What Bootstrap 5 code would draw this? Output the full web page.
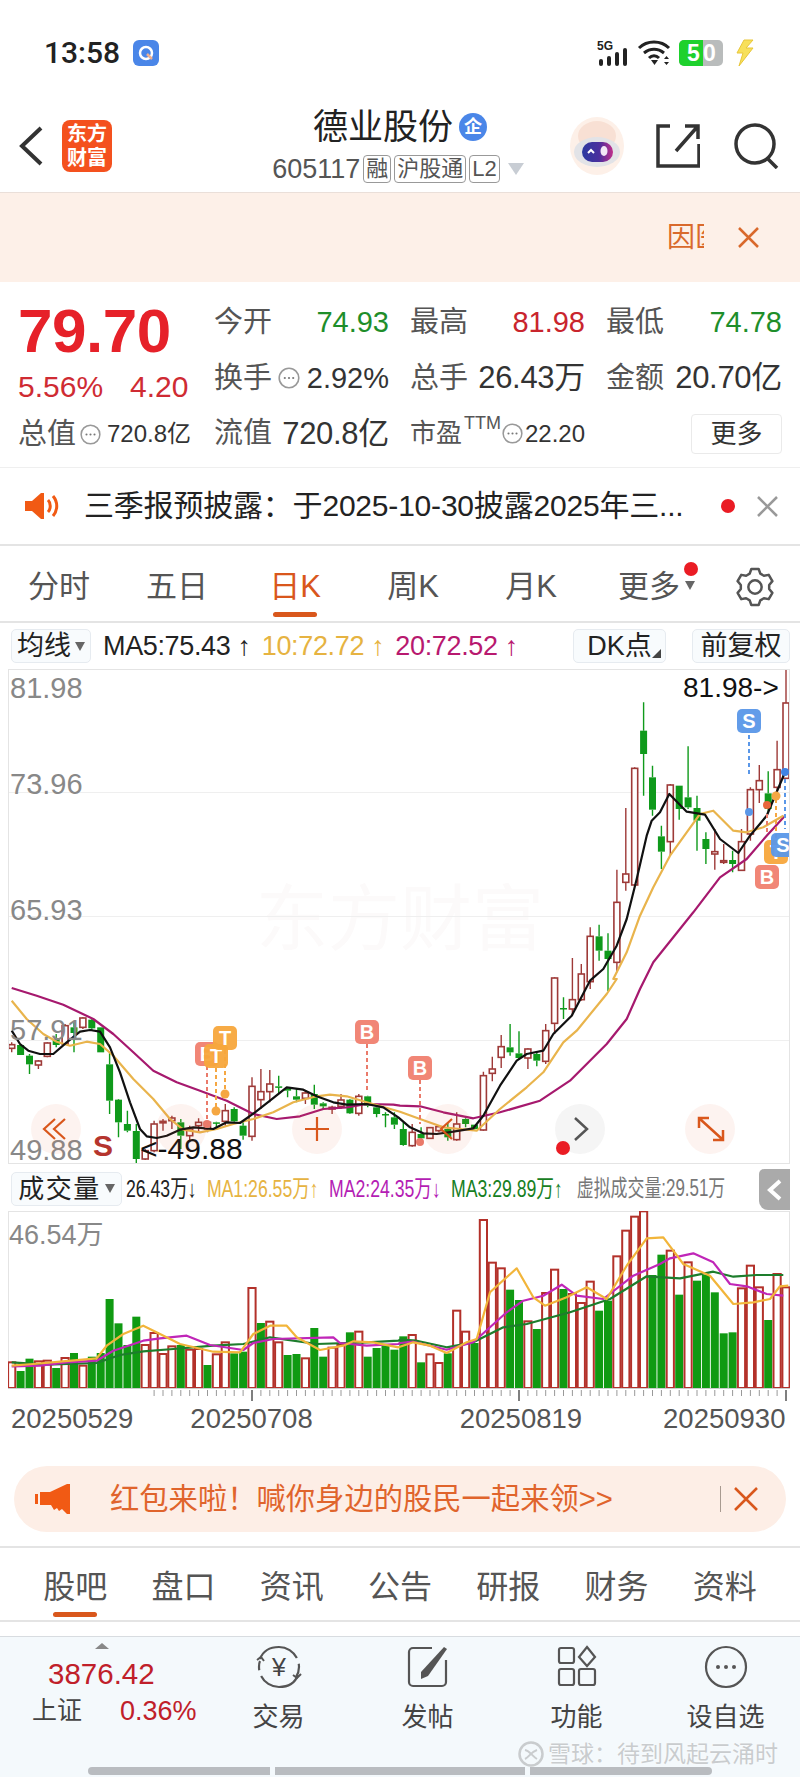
<!DOCTYPE html>
<html lang="zh">
<head>
<meta charset="UTF-8">
<meta name="viewport" content="width=device-width, initial-scale=1.0">
<title>德业股份</title>
<link href="https://cdn.jsdelivr.net/npm/bootstrap@5.3.0/dist/css/bootstrap.min.css" rel="stylesheet">
<style>
  html, body { margin: 0; width: 800px; height: 1778px; overflow: hidden; background: #fff; }
  body { font-family: "Liberation Sans", "Noto Sans CJK SC", sans-serif; color: #333; }
  svg { display: block; flex: none; }
  svg text { font-family: "Liberation Sans", "Noto Sans CJK SC", sans-serif; }

  .status-bar { height: 100px; padding: 5px 44px 0; }
  .clock { font-family: Roboto, sans-serif; font-size: 30px; font-weight: 500; color: #222; }
  .app-dot { width: 26px; height: 26px; border-radius: 6px; background: #4a86e8; margin-left: 13px; }
  .batt { width: 44px; height: 26px; border-radius: 5px; background: #b9bcbc; overflow: hidden; font-size: 23px; font-weight: 700; color: #fff; line-height: 26px; margin: 0 9px 0 8px; }
  .batt-fill { width: 24px; height: 26px; background: #1ed12d; padding-left: 8px; }

  .top-bar { height: 93px; border-bottom: 1px solid #eadfd9; }
  .logo-box { width: 50px; height: 52px; border-radius: 8px; background: #f4511e; color: #fff; font-size: 20px; font-weight: 700; line-height: 24px; text-align: center; padding-top: 2px; margin: 0 0 0 16px; }
  .top-title { left: 0; width: 800px; top: 5px; }
  .stock-name { font-size: 35px; line-height: 44px; color: #222; }
  .name-badge { width: 28px; height: 28px; border-radius: 50%; background: #4a86e8; color: #fff; font-size: 18px; font-weight: 700; line-height: 28px; text-align: center; margin-left: 6px; }
  .stock-code { font-size: 27px; line-height: 34px; color: #555; margin-top: 3px; padding-right: 4px; }
  .code-tag { border: 1px solid #999; border-radius: 4px; font-size: 22px; line-height: 26px; padding: 0 2px; margin-left: 3px; color: #555; }
  .code-caret { width: 0; height: 0; border: 8px solid transparent; border-top: 12px solid #c8cdd4; border-bottom: 0; margin-left: 8px; }

  .warn-strip { height: 89px; background: #fdf0e8; color: #d9692c; padding-right: 40px; }
  .warn-clip { width: 37px; overflow: hidden; white-space: nowrap; font-size: 28px; margin-right: 33px; }

  .quote-box { height: 186px; padding: 13px 18px 0; border-bottom: 1px solid #efefef; }
  .quote-left { width: 197px; }
  .last-price { font-size: 62px; font-weight: 700; line-height: 72px; color: #e62129; letter-spacing: -.5px; }
  .price-change { font-size: 30px; line-height: 40px; color: #cf2b33; }
  .left-total { line-height: 38px; font-size: 29px; color: #555; white-space: nowrap; margin-top: 8px; }
  .left-total b { font-weight: 400; font-size: 24px; color: #333; margin-left: 6px; }
  .quote-grid { display: grid; grid-template-columns: 175px 175px 176px; column-gap: 21px; grid-auto-rows: 55.5px; }
  .quote-cell { display: flex; align-items: center; justify-content: space-between; font-size: 29px; color: #555; white-space: nowrap; }
  .val-dark { color: #333; }
  .val-big { font-size: 31px; letter-spacing: -.3px; }
  .val-green { color: #1e8e2a; }
  .val-red { color: #c9252d; }
  .pe-label { font-size: 26px; }
  .pe-label sup { font-size: 18px; top: -13px; margin-left: 2px; }
  .pe-val { font-size: 24px; color: #333; }
  .more-btn { width: 91px; height: 40px; border: 1px solid #eaeaea; border-radius: 4px; background: #fff; font-size: 26px; line-height: 38px; text-align: center; color: #333; margin-left: auto; }

  .notice-row { height: 78px; border-bottom: 2px solid #e4e4e4; padding: 0 22px 0 25px; }
  .notice-text { font-size: 30px; color: #222; width: 600px; margin-left: 25px; padding-bottom: 2px; white-space: nowrap; letter-spacing: -.2px; }
  .notice-dot { width: 14px; height: 14px; border-radius: 50%; background: #ea1c24; margin-left: 37px; margin-right: 22px; }

  .period-tabs { height: 77px; padding-top: 7px; border-bottom: 2px solid #e4e4e4; }
  .period-tab { width: 118px; text-align: center; font-size: 31px; color: #555; position: relative; }
  .tab-on { color: #d9571c; }
  .tab-on::after { content: ""; position: absolute; left: 50%; bottom: -7px; width: 44px; height: 5px; margin-left: -22px; background: #d9571c; border-radius: 3px; }
  .red-pin { position: absolute; right: -18px; top: -7px; width: 14px; height: 14px; border-radius: 50%; background: #ea1c24; }
  .small-caret { position: absolute; right: -15px; top: 12px; border: 5px solid transparent; border-top: 9px solid #666; border-bottom: 0; }

  .ma-row { height: 46px; padding: 0 10px 0 11px; font-size: 27px; white-space: nowrap; }
  .ma-chip { border: 1px solid #e6ebf0; border-radius: 5px; background: #f8fbfd; height: 34px; line-height: 32px; font-size: 27px; color: #222; text-align: center; position: relative; }
  .ma-val { margin-right: 11px; letter-spacing: -.35px; }
  .c-black { color: #222; } .c-orange { color: #e6b341; } .c-pink { color: #b8196f; }
  .c-violet { color: #b41db4; } .c-dkgreen { color: #17801f; } .c-grey { color: #777; }
  .chip-caret { border: 5px solid transparent; border-top: 9px solid #666; border-bottom: 0; }
  .chip-corner { position: absolute; right: 4px; bottom: 4px; border-left: 9px solid transparent; border-bottom: 9px solid #444; }

  .chart-box { margin-left: 8px; width: 782px; border: 1px solid #e4e4e4; }
  .vol-head { height: 47px; padding: 2px 0 0 11px; position: relative; white-space: nowrap; }
  .vol-head .ma-chip { flex: none; width: 111px; height: 34px; margin-right: 4px; font-size: 26px; letter-spacing: 1.5px; }
  .vol-vals { flex: none; width: 800px; display: flex; align-items: center; font-size: 24px; transform: scaleX(.735); transform-origin: left center; }
  .vol-val { margin-right: 14px; }
  .vol-virtual { margin-left: 5px; font-size: 23px; }
  .fold-tab { position: absolute; right: 10px; top: 5px; width: 31px; height: 41px; background: #aaa; border-top-left-radius: 5px; border-bottom-left-radius: 9px; }
  .vol-wrap { margin-left: 8px; width: 782px; }
  .date-row { height: 32px; margin-top: -8px; font-size: 27.5px; color: #555; padding-left: 3px; }
  .date-row span + span { margin-left: 57px; }
  .date-row span:nth-child(3) { margin-left: 147px; }
  .date-row span:nth-child(4) { margin-left: 81px; }

  .promo-pill { margin: 36px 14px 0; height: 66px; border-radius: 33px; background: #fdeee6; padding: 0 28px 0 21px; color: #e0642c; font-size: 29.3px; white-space: nowrap; }
  .promo-text { margin-left: 39px; flex: 1; }
  .promo-sep { width: 1px; height: 26px; background: #a89a90; margin-right: 13px; }

  .info-tabs { height: 76px; margin-top: 14px; padding: 6px 21px 0; border-top: 2px solid #e4e4e4; border-bottom: 2px solid #e4e4e4; }
  .info-tab { flex: 1; text-align: center; font-size: 32px; color: #555; position: relative; }
  .info-tab.tab-on::after { bottom: -6px; }

  .bottom-bar { position: relative; margin-top: 14px; height: 141px; background: #f4f9fc; border-top: 1px solid #d8dce0; }
  .index-cell { width: 204px; position: relative; }
  .index-caret { position: absolute; left: 95px; top: 6px; border: 7px solid transparent; border-bottom: 6px solid #888; border-top: 0; }
  .index-num { position: absolute; left: 48px; top: 15px; font-size: 29.5px; color: #c0202a; }
  .index-name { position: absolute; left: 32px; top: 55px; font-size: 25px; color: #444; }
  .index-pct { position: absolute; left: 120px; top: 54px; font-size: 27px; color: #c0202a; }
  .bar-item { width: 149px; text-align: center; font-size: 26px; line-height: 36px; color: #444; padding-top: 8px; }
  .bar-item svg { margin: 0 auto 10px; }
  .xq-mark { position: absolute; right: 22px; top: 100px; color: #c9ccce; font-size: 23px; white-space: nowrap; text-shadow: 0 0 2px #fff; }
  .home-bars { position: absolute; left: 88px; top: 130px; gap: 5px; }
  .home-bars span { height: 8px; background: #b9bcc0; display: block; }
</style>
</head>
<body>
<svg width="0" height="0" style="position:absolute">
  <defs><linearGradient id="visor" x1="0" x2="1" y1="0" y2="0"><stop offset="0" stop-color="#2b3aa0"/><stop offset=".55" stop-color="#4a2f9e"/><stop offset="1" stop-color="#c02f8a"/></linearGradient></defs>
  <symbol id="dots" viewBox="0 0 22 22">
    <circle cx="11" cy="11" r="9.8" fill="none" stroke="#999" stroke-width="1.6"/>
    <circle cx="6.8" cy="11" r="1.1" fill="#777"/><circle cx="11" cy="11" r="1.1" fill="#777"/><circle cx="15.2" cy="11" r="1.1" fill="#777"/>
  </symbol>
</svg>

<div class="status-bar d-flex align-items-center">
  <span class="clock">13:58</span>
  <span class="app-dot d-flex align-items-center justify-content-center">
    <svg width="18" height="18" viewBox="0 0 18 18"><circle cx="9" cy="9" r="6" fill="none" stroke="#fff" stroke-width="2.5"/><path d="M10 10l5 5" stroke="#f0b090" stroke-width="2.5"/></svg>
  </span>
  <div class="ms-auto d-flex align-items-center">
    <svg width="32" height="28" viewBox="0 0 32 28"><text x="0" y="11" font-size="12" font-weight="700" fill="#222">5G</text><rect x="2" y="20" width="4" height="7" rx="2" fill="#222"/><rect x="10" y="17" width="4" height="10" rx="2" fill="#222"/><rect x="18" y="13" width="4" height="14" rx="2" fill="#222"/><rect x="26" y="9" width="4" height="18" rx="2" fill="#222"/></svg>
    <svg class="ms-2" width="34" height="28" viewBox="0 0 34 28"><path d="M2 9C10 1 24 1 32 9M7 14c6-5 14-5 20 0M12 19c3-3 7-3 10 0" fill="none" stroke="#222" stroke-width="3"/><path d="M14 21h7l-3.5 5z" fill="#222"/><path d="M27 20l2.5-3 2.5 3zM27 23l2.5 3 2.5-3z" fill="#222"/></svg>
    <div class="batt d-flex"><div class="batt-fill">5</div><div>0</div></div>
    <svg width="24" height="34" viewBox="0 0 24 34"><path d="M12 4L5 17h6L7 30 21 12h-7l7-8z" fill="#f7e05a" stroke="#e8c63a"/></svg>
  </div>
</div>

<div class="top-bar d-flex align-items-center position-relative">
  <div class="position-absolute top-title text-center">
    <div class="d-flex align-items-center justify-content-center stock-name">德业股份<span class="name-badge">企</span></div>
    <div class="d-flex align-items-center justify-content-center stock-code">605117<span class="code-tag">融</span><span class="code-tag">沪股通</span><span class="code-tag">L2</span><span class="code-caret"></span></div>
  </div>
  <svg class="ms-3 position-relative" width="30" height="44" viewBox="0 0 30 44"><path d="M25 4L6 22l19 18" fill="none" stroke="#333" stroke-width="4"/></svg>
  <div class="logo-box position-relative">东方<br>财富</div>
  <div class="ms-auto d-flex align-items-center position-relative">
    <svg width="58" height="60" viewBox="0 0 58 60"><ellipse cx="29" cy="30" rx="27" ry="29" fill="#fdf0e8"/><ellipse cx="29" cy="20" rx="19" ry="15" fill="#f8e0d4"/><ellipse cx="29" cy="36" rx="23" ry="15" fill="#e2e3e7"/><rect x="14" y="26" width="31" height="20" rx="10" fill="url(#visor)"/><ellipse cx="36" cy="35" rx="3.5" ry="5" fill="#f3e8f6"/><path d="M20 37l3-3 3 3" fill="none" stroke="#fff" stroke-width="2"/></svg>
    <svg style="margin-left:30px" width="44" height="44" viewBox="0 0 44 44"><path d="M14 2H2v40h41V20M20 27L42 2M29 2h13v13" fill="none" stroke="#333" stroke-width="3.5"/></svg>
    <svg style="margin:0 20px 0 34px" width="46" height="46" viewBox="0 0 46 46"><circle cx="21" cy="21" r="19" fill="none" stroke="#333" stroke-width="3.5"/><path d="M33 35l10 10" stroke="#333" stroke-width="3.5"/></svg>
  </div>
</div>

<div class="warn-strip d-flex align-items-center justify-content-end">
  <div class="warn-clip">因医</div>
  <svg width="23" height="23" viewBox="0 0 23 23"><path d="M2 2l19 19M21 2L2 21" stroke="#d9692c" stroke-width="2.5"/></svg>
</div>

<div class="quote-box d-flex">
  <div class="quote-left">
    <div class="last-price">79.70</div>
    <div class="price-change d-flex"><span>5.56%</span><span style="margin-left:27px">4.20</span></div>
    <div class="left-total d-flex align-items-center">总值<svg class="ms-1" width="21" height="21"><use href="#dots"/></svg><b>720.8亿</b></div>
  </div>
  <div class="quote-grid">
    <div class="quote-cell"><span>今开</span><span class="val-green">74.93</span></div>
    <div class="quote-cell"><span>最高</span><span class="val-red">81.98</span></div>
    <div class="quote-cell"><span>最低</span><span class="val-green">74.78</span></div>
    <div class="quote-cell"><span>换手</span><svg width="22" height="22"><use href="#dots"/></svg><span class="val-dark">2.92%</span></div>
    <div class="quote-cell"><span>总手</span><span class="val-dark val-big">26.43万</span></div>
    <div class="quote-cell"><span>金额</span><span class="val-dark val-big">20.70亿</span></div>
    <div class="quote-cell"><span>流值</span><span class="val-dark val-big">720.8亿</span></div>
    <div class="quote-cell"><span class="pe-label">市盈<sup>TTM</sup></span><svg width="21" height="21"><use href="#dots"/></svg><span class="pe-val">22.20</span></div>
    <div class="quote-cell"><div class="more-btn">更多</div></div>
  </div>
</div>

<div class="notice-row d-flex align-items-center">
  <svg width="34" height="28" viewBox="0 0 34 28"><path d="M0 9h7l9-8h3v26h-3l-9-8H0z" fill="#f15a14"/><path d="M23 8c3 3 3 9 0 12M28 4c5 6 5 14 0 20" fill="none" stroke="#f15a14" stroke-width="3"/></svg>
  <div class="notice-text">三季报预披露：于2025-10-30披露2025年三...</div>
  <span class="notice-dot"></span>
  <svg width="21" height="21" viewBox="0 0 21 21"><path d="M1 1l19 19M20 1L1 20" stroke="#999" stroke-width="2.5"/></svg>
</div>

<div class="period-tabs d-flex align-items-center">
  <div class="period-tab">分时</div>
  <div class="period-tab">五日</div>
  <div class="period-tab tab-on">日K</div>
  <div class="period-tab">周K</div>
  <div class="period-tab">月K</div>
  <div class="period-tab"><span class="position-relative">更多<span class="red-pin"></span><span class="small-caret"></span></span></div>
  <svg style="margin-left:27px" width="40" height="40" viewBox="0 0 24 24"><path id="gearPath" fill="none" stroke="#555" stroke-width="1.5" stroke-linejoin="round"/><circle cx="12" cy="12" r="4" fill="none" stroke="#555" stroke-width="1.5"/></svg>
</div>

<div class="ma-row d-flex align-items-center">
  <div class="ma-chip d-flex align-items-center justify-content-center" style="width:80px;margin-right:12px">均线<span class="chip-caret ms-1"></span></div>
  <span class="ma-val c-black">MA5:75.43 ↑</span>
  <span class="ma-val c-orange">10:72.72 ↑</span>
  <span class="ma-val c-pink">20:72.52 ↑</span>
  <div class="ma-chip ms-auto" style="width:93px">DK点<span class="chip-corner"></span></div>
  <div class="ma-chip" style="width:98px;margin-left:26px">前复权</div>
</div>

<div class="chart-box">
  <svg id="kChart" width="780" height="493" viewBox="9 671 780 493">
    <text x="400" y="945" font-size="72" fill="#fcfafa" text-anchor="middle">东方财富</text>
    <path d="M9 793.5H789M9 917.5H789M9 1041.5H789" stroke="#efefef"/>
    <g id="kCandles"></g>
    <g fill="#888" font-size="29">
      <text x="10" y="699">81.98</text><text x="10" y="795">73.96</text><text x="10" y="921">65.93</text><text x="10" y="1041">57.91</text><text x="10" y="1161">49.88</text>
    </g>
    <text x="683" y="698" font-size="28" fill="#111">81.98-&gt;</text>
    <text x="140" y="1160" font-size="30" fill="#111">&lt;-49.88</text>
    <text x="93" y="1157" font-size="30" font-weight="700" fill="#b5352e">S</text>

    <!-- chart buttons -->
    <g fill="#e8633a" fill-opacity=".08"><circle cx="56" cy="1130" r="25"/><circle cx="181" cy="1130" r="25"/><circle cx="317" cy="1130" r="25"/><circle cx="448" cy="1130" r="25"/><circle cx="710" cy="1130" r="25"/></g>
    <circle cx="580" cy="1130" r="25" fill="#777" fill-opacity=".07"/>
    <path d="M55 1120l-11 10 11 10M65 1120l-11 10 11 10" fill="none" stroke="#d9571c" stroke-width="2.2"/>
    <path d="M317 1118v24M305 1130h24" stroke="#d9571c" stroke-width="2.2"/>
    <path d="M452 1120l-11 10 11 10" fill="none" stroke="#d9571c" stroke-width="2.2"/>
    <path d="M575 1119l12 11-12 11" fill="none" stroke="#555" stroke-width="2.5"/>
    <path d="M700 1120l22 20M699 1129v-10h10M723 1131v10h-10" fill="none" stroke="#d9571c" stroke-width="2.5"/>
    <circle cx="563" cy="1149" r="7" fill="#ea1c24"/>

    <!-- trade signals -->
    <g stroke-width="2" stroke-dasharray="4 3" fill="none">
      <path d="M367 1045v46M420 1081v44M207 1067v58" stroke="#ea7a6a"/>
      <path d="M216 1069v43M225 1051v44M776 800v42" stroke="#f5a742"/>
      <path d="M749 736v42M785 780v50" stroke="#5a97e8"/>
      <path d="M767 815v20" stroke="#ea7a6a"/>
    </g>
    <g fill="#f5a742"><circle cx="216" cy="1112" r="4.5"/><circle cx="225" cy="1095" r="4.5"/><circle cx="776" cy="797" r="4.5"/></g>
    <circle cx="207" cy="1125" r="4" fill="#ea7a6a"/><circle cx="767" cy="806" r="4" fill="#e8663c"/><circle cx="420" cy="1143" r="4" fill="#ea7a6a"/>
    <circle cx="749" cy="813" r="4" fill="#5a97e8"/><circle cx="785" cy="773" r="4" fill="#3f83e4"/>
    <g id="signalTags" font-size="20" font-weight="700" fill="#fff" text-anchor="middle"></g>
  </svg>
</div>

<div class="vol-head d-flex align-items-center">
  <div class="ma-chip d-flex align-items-center justify-content-center">成交量<span class="chip-caret ms-1"></span></div>
  <div class="vol-vals">
    <span class="vol-val c-black">26.43万↓</span>
    <span class="vol-val c-orange">MA1:26.55万↑</span>
    <span class="vol-val c-violet">MA2:24.35万↓</span>
    <span class="vol-val c-dkgreen">MA3:29.89万↑</span>
    <span class="c-grey vol-virtual">虚拟成交量:29.51万</span>
  </div>
  <div class="fold-tab d-flex align-items-center justify-content-center">
    <svg width="16" height="22" viewBox="0 0 16 22"><path d="M13 2L3 11l10 9" fill="none" stroke="#fff" stroke-width="4"/></svg>
  </div>
</div>

<div class="vol-wrap">
  <svg id="volChart" width="782" height="195" viewBox="8 1212 782 195">
    <path d="M8 1212.5H790M8.5 1212V1390M789.5 1212V1390" stroke="#e4e4e4" fill="none"/>
    <g id="volBars"></g>
    <text x="9" y="1245" font-size="27" fill="#888">46.54万</text>
  </svg>
  <div class="date-row d-flex">
    <span>20250529</span><span>20250708</span><span>20250819</span><span>20250930</span>
  </div>
</div>

<div class="promo-pill d-flex align-items-center">
  <svg width="36" height="32" viewBox="0 0 36 32"><path d="M0 11h3v10H0zM5 9h10L32 1h3v30h-3l-5-5-3 2-2-3-3 2-3-5H5z" fill="#f15a14"/></svg>
  <div class="promo-text">红包来啦！喊你身边的股民一起来领&gt;&gt;</div>
  <span class="promo-sep"></span>
  <svg width="24" height="24" viewBox="0 0 24 24"><path d="M1 1l22 22M23 1L1 23" stroke="#d9571c" stroke-width="2.5"/></svg>
</div>

<div class="info-tabs d-flex align-items-center">
  <div class="info-tab tab-on">股吧</div>
  <div class="info-tab">盘口</div>
  <div class="info-tab">资讯</div>
  <div class="info-tab">公告</div>
  <div class="info-tab">研报</div>
  <div class="info-tab">财务</div>
  <div class="info-tab">资料</div>
</div>

<div class="bottom-bar d-flex">
  <div class="index-cell">
    <span class="index-caret"></span>
    <span class="index-num">3876.42</span>
    <span class="index-name">上证</span>
    <span class="index-pct">0.36%</span>
  </div>
  <div class="bar-item">
    <svg width="48" height="44" viewBox="0 0 48 44"><path d="M5 14C8 6 15 2 24 2c11 0 20 9 20 20 0 4-1 7-3 10M43 30C40 38 33 42 24 42 13 42 4 33 4 22c0-2 0-4 1-6" fill="none" stroke="#555" stroke-width="2.2" stroke-dasharray="46 6 60"/><path d="M2 15l4-3 3 4M38 30l4 3 4-4" fill="none" stroke="#555" stroke-width="2"/><text x="24" y="31" font-size="25" text-anchor="middle" fill="#444">¥</text></svg>
    交易
  </div>
  <div class="bar-item">
    <svg width="44" height="44" viewBox="0 0 44 44"><path d="M26 3H7a4 4 0 0 0-4 4v30a4 4 0 0 0 4 4h29a4 4 0 0 0 4-4V15" fill="none" stroke="#555" stroke-width="2.2"/><path d="M15 27L38 2l3 2-19 27-7 3z" fill="#555"/></svg>
    发帖
  </div>
  <div class="bar-item">
    <svg width="44" height="44" viewBox="0 0 44 44"><g fill="none" stroke="#555" stroke-width="2.2"><rect x="4" y="3" width="15" height="15" rx="2"/><rect x="4" y="24" width="15" height="16" rx="2"/><rect x="24" y="24" width="16" height="16" rx="2"/><path d="M32 2l8 10-8 9-8-9z"/></g></svg>
    功能
  </div>
  <div class="bar-item">
    <svg width="44" height="44" viewBox="0 0 44 44"><circle cx="22" cy="22" r="20" fill="none" stroke="#555" stroke-width="2.2"/><circle cx="14" cy="22" r="2" fill="#555"/><circle cx="22" cy="22" r="2" fill="#555"/><circle cx="30" cy="22" r="2" fill="#555"/></svg>
    设自选
  </div>
  <div class="xq-mark d-flex align-items-center">
    <svg class="me-1" width="26" height="26" viewBox="0 0 26 26"><circle cx="13" cy="13" r="11.5" fill="none" stroke="#c9ccce" stroke-width="2.5"/><path d="M7 9c5 1 7 6 12 9M7 18c4-2 6-7 12-9" fill="none" stroke="#c9ccce" stroke-width="2"/></svg>
    雪球：待到风起云涌时
  </div>
  <div class="home-bars d-flex">
    <span style="width:182px;border-radius:4px 0 0 4px"></span>
    <span style="width:250px"></span>
    <span style="width:182px;border-radius:0 4px 4px 0"></span>
  </div>
</div>

<script>
  const RED = '#9e3a38', GREEN = '#0f9a1b';
  const xAt = i => 11.7 + 8.9 * i;

  // [up, high, top, bottom, low], y read off the chart
  const leftCandles = [
    [1,250,257,268,280],[0,255,258,288,288],[0,285,290,316,345],[1,303,306,318,330],[1,250,252,292,295],
    [0,225,240,258,265],[1,195,200,255,258],[0,190,205,222,280],[1,175,177,205,210],[0,178,182,208,215],
    [0,205,205,280,280],[0,280,316,425,465],[0,420,422,490,535],[0,455,495,515,520],[0,495,516,600,612],
    [1,570,575,600,603],[1,485,495,575,580],[1,480,487,490,515],[1,470,477,485,510],[0,480,490,530,570],
    [1,500,510,530,550],[1,478,490,500,520],[1,485,490,510,520],[0,488,490,492,510],[1,435,455,487,500],
    [0,445,450,487,490],[0,490,500,530,542],[1,355,382,532,545],[1,330,398,422,450],[1,333,375,398,430],
    [0,350,382,384,405],[0,385,388,395,415],[0,390,412,422,430],[1,393,402,418,435],[0,377,405,437,450],
    [0,430,433,442,452],[1,440,445,450,465],[1,405,423,442,450],[0,420,422,463,465],[1,405,412,463,470],
    [0,410,412,440,445],[0,443,445,465,475],[0,460,465,468,505],[0,460,475,497,510],[0,490,510,558,560],
    [1,495,520,560,563],[0,505,525,538,540],[1,505,506,538,540],[1,500,503,515,520],[0,490,510,535,545],
    [1,460,495,542,545],[0,478,480,495,505],[0,497,497,510,512],[1,338,350,513,515],[1,293,330,343,367],
    [1,228,263,295,327],[0,195,265,280,290],[0,217,283,297,300],[1,268,270,297,330],[0,280,285,305,322],
    [1,195,215,307,315],[1,55,57,193,225],[0,115,147,150,180],[1,-3,122,150,170],[1,15,45,122,125]
  ];
  const rightCandles = [
    [1,805,832,968,990],[0,797,832,875,905],[0,823,875,900,996],[1,632,730,910,940],[1,447,645,670,695],
    [1,325,328,678,680],[0,130,215,285,410],[0,320,355,452,470],[0,500,532,578,630],[1,375,378,548,590],
    [0,380,380,450,482],[0,262,415,445,450],[0,410,447,485,575],[0,520,540,570,615],[1,510,578,585,632],
    [1,555,605,610,615],[0,575,603,615,640],[1,510,548,634,636],[1,385,392,525,545],[1,318,365,392,432],
    [0,337,403,450,460],[1,245,332,385,400],[1,32,132,358,360]
  ];
  const candles = leftCandles.map(c => [c[0], ...c.slice(1).map(v => 960 + v / 3)])
    .concat(rightCandles.map(c => [c[0], ...c.slice(1).map(v => 660 + v / 3)]));

  // line points are kept per chart stretch: [xBase, yBase, [x, y, ...]]
  function linePoints(parts) {
    const pts = [];
    parts.forEach(([ox, oy, arr]) => {
      for (let i = 0; i < arr.length; i += 2) pts.push((ox + arr[i] / 3).toFixed(1) + ',' + (oy + arr[i + 1] / 3).toFixed(1));
    });
    return pts.join(' ');
  }

  const ma5 = [
    [0,960,[35,215,60,255,85,275,120,285,160,285,200,250,240,218,270,213,300,218,330,265,360,340,390,430,420,510,440,532,470,537,500,530,540,512,580,505,640,510,680,490,720,492,765,460,810,425,860,385,910,392,950,412,1000,430,1040,437,1100,435,1150,445,1195,475]],
    [400,960,[30,505,70,523,110,525,160,518,220,508,250,470,300,380,350,305,380,285,430,275,460,225,515,170,570,65,610,30]],
    [400,660,[650,860,680,780,710,660,740,530,755,485,780,460,808,405,860,458,915,467,960,540,1015,582,1050,530,1100,470,1155,340]]
  ];
  const ma10 = [
    [0,960,[35,125,80,180,130,225,170,248,210,260,260,248,300,255,340,290,400,360,460,420,510,480,550,512,600,520,650,510,700,495,760,480,820,460,880,430,950,412,990,407,1040,412,1100,430]],
    [400,960,[0,458,60,480,130,505,180,510,230,515,300,450,380,385,430,340,490,250,530,215,620,105,650,60]],
    [400,660,[640,960,680,880,720,770,760,685,810,590,860,520,900,465,940,455,1000,515,1040,520,1090,505,1150,470]]
  ];
  const ma20 = [
    [0,960,[35,87,110,110,190,137,280,180,340,225,400,280,460,335,530,370,600,395,680,425,760,465,830,480,900,472,970,450,1040,445,1100,435,1180,437]],
    [400,960,[0,440,60,442,130,460,220,478,300,460,420,425,510,365,620,255,680,180,720,90]],
    [400,660,[760,910,880,760,960,655,1040,600,1100,530,1155,470]]
  ];

  let k = '';
  candles.forEach((c, i) => {
    const x = xAt(i), col = c[0] ? RED : GREEN;
    k += `<path d="M${x} ${c[1]}V${c[2]}M${x} ${c[3]}V${c[4]}" stroke="${col}" stroke-width="1.4"/>`;
    k += c[0]
      ? `<rect x="${x - 3}" y="${c[2]}" width="6" height="${Math.max(c[3] - c[2], 1.5)}" fill="#fff" stroke="${col}" stroke-width="1.6"/>`
      : `<rect x="${x - 3.5}" y="${c[2]}" width="7" height="${Math.max(c[3] - c[2], 1.5)}" fill="${col}"/>`;
  });
  [[ma20, '#a6196e'], [ma10, '#e9b44c'], [ma5, '#111']].forEach(([m, col]) => {
    k += `<polyline points="${linePoints(m)}" fill="none" stroke="${col}" stroke-width="2.2" stroke-linejoin="round"/>`;
  });
  document.getElementById('kCandles').innerHTML = k;

  // B/S/T tags
  const tags = [
    [207,1055,'#f0806f','B'],[216,1057,'#f7a63c','T'],[225,1039,'#f7a63c','T'],[367,1033,'#f0806f','B'],
    [420,1069,'#f0806f','B'],[749,722,'#5a97e8','S'],[776,853,'#f7a63c','T'],[767,878,'#f0806f','B'],[783,846,'#5a97e8','S']
  ];
  document.getElementById('signalTags').innerHTML = tags.map(([x, y, col, t]) =>
    `<rect x="${x - 12}" y="${y - 12}" width="24" height="24" rx="5" fill="${col}" fill-opacity=".95"/><text x="${x}" y="${y + 7}">${t}</text>`).join('');

  // volume bars, top y off the chart
  const volTops = [580,606,569,577,575,597,567,552,590,563,552,390,463,528,443,528,492,555,532,528,542,540,588,556,520,553,548,357,462,458,520,558,555,568,477,563,536,528,490,488,563,537,530,542,
    502,498,580,556,582,553,425,488,522,153,281,298,362,393,457,480,372,302,360,375,402,338,425,395,262,185,143,127,318,257,245,377,280,335,318,370,493,490,358,290,355,453,315,355];
  const volUp = [1,0,0,1,1,0,1,0,1,0,0,0,0,0,0,1,1,1,1,0,1,1,0,1,1,0,0,1,0,1,1,0,0,1,0,0,1,1,0,1,0,0,0,0,
    0,1,0,1,1,0,1,1,0,1,1,1,0,0,1,0,1,1,0,1,1,1,0,0,1,1,1,1,0,0,1,0,1,0,0,0,0,0,1,1,1,0,1,1];
  const BASE = 1389;
  let v = '';
  volTops.forEach((t, i) => {
    const y = 1170 + t / 3, x = xAt(i);
    v += volUp[i]
      ? `<rect x="${x - 3.6}" y="${y}" width="7.2" height="${BASE - y}" fill="#fff" stroke="#b3312a" stroke-width="2"/>`
      : `<rect x="${x - 4}" y="${y}" width="8" height="${BASE - y}" fill="#109a12"/>`;
  });
  const volMa1 = [[0,1170,[35,590,100,585,180,578,290,568,320,530,370,495,430,470,480,495,540,525,640,548,720,550,760,495,810,470,860,470,890,505,960,543,1030,530,1060,517,1120,520,1195,535]],
    [400,1170,[0,533,40,520,90,530,140,552,200,520,230,510,270,370,350,298,400,385,435,410,500,385,560,355,620,390,680,290,740,208,790,205,850,285,930,320,1000,405,1060,400,1110,390,1140,352,1165,350]]];
  const volMa2 = [[0,1170,[35,592,120,590,200,580,290,575,340,545,430,515,480,508,560,500,630,528,730,543,760,522,820,510,1000,505,1020,522,1100,530,1195,525]],
    [400,1170,[0,522,40,518,140,542,220,520,320,430,370,395,430,380,485,347,530,380,610,390,700,320,780,285,810,268,880,253,940,280,990,345,1040,352,1100,375,1150,380]]];
  const volMa3 = [[0,1170,[35,580,140,587,290,582,360,558,430,547,520,540,640,530,730,525,810,505,950,525,1100,520,1195,515]],
    [400,1170,[0,512,50,515,140,535,220,520,310,475,380,465,510,430,630,390,740,322,840,328,940,308,1000,323,1070,318,1150,318]]];
  [[volMa3, '#1d7d2c'], [volMa2, '#c026b8'], [volMa1, '#f2b53a']].forEach(([m, col]) => {
    v += `<polyline points="${linePoints(m)}" fill="none" stroke="${col}" stroke-width="2.2" stroke-linejoin="round"/>`;
  });
  v += `<path d="M8 ${BASE + .5}H790" stroke="#ccc"/>`;
  for (let i = 16; i < 88; i++) {
    const major = (i - 27) % 30 === 0;
    v += `<path d="M${xAt(i)} ${BASE + 2}v${major ? 11 : 6}" stroke="${major ? '#555' : '#999'}" stroke-width="${major ? 1.5 : 1}"/>`;
  }
  document.getElementById('volBars').innerHTML = v;

  // six-tooth gear for the settings button
  let d = '';
  for (let a = 0; a < 6; a++) {
    const th = a * Math.PI / 3, p = (r, off) => (12 + r * Math.sin(th + off)).toFixed(2) + ' ' + (12 - r * Math.cos(th + off)).toFixed(2);
    d += (a ? 'L' : 'M') + p(8.6, -.38) + 'L' + p(11, -.2) + 'L' + p(11, .2) + 'L' + p(8.6, .38);
  }
  document.getElementById('gearPath').setAttribute('d', d + 'Z');
</script>
<script src="https://cdn.jsdelivr.net/npm/bootstrap@5.3.0/dist/js/bootstrap.bundle.min.js"></script>
</body>
</html>
